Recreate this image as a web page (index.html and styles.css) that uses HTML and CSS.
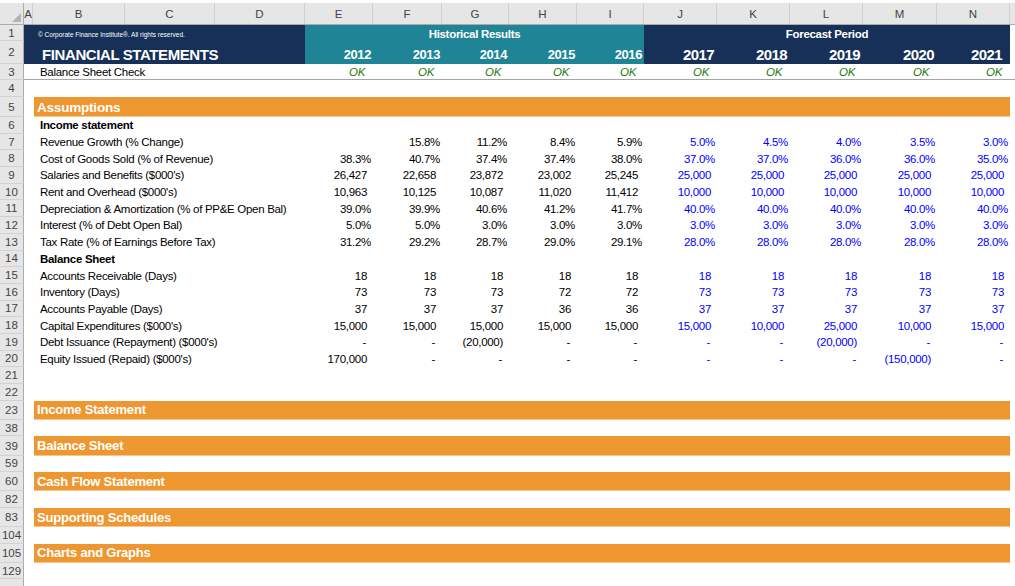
FILE: index.html
```html
<!DOCTYPE html>
<html>
<head>
<meta charset="utf-8">
<link rel="stylesheet" href="styles.css">
</head>
<body>
<div class="sheet">
  <div class="row colhead">
    <div class="corner"><span class="tri"></span></div>
    <div class="ch">A</div><div class="ch">B</div><div class="ch">C</div><div class="ch">D</div>
    <div class="ch">E</div><div class="ch">F</div><div class="ch">G</div><div class="ch">H</div><div class="ch">I</div>
    <div class="ch">J</div><div class="ch">K</div><div class="ch">L</div><div class="ch">M</div><div class="ch">N</div>
    <div class="ch last"></div>
  </div>

  <div class="row r1">
    <div class="rn">1</div>
    <div class="navy brand"><span class="copy">© Corporate Finance Institute®. All rights reserved.</span></div>
    <div class="teal grp">Historical Results</div>
    <div class="navy grp">Forecast Period</div>
    <div></div>
  </div>

  <div class="row r2">
    <div class="rn">2</div>
    <div class="navy brand"><span class="title">FINANCIAL STATEMENTS</span></div>
    <div class="teal yr">2012</div><div class="teal yr">2013</div><div class="teal yr">2014</div><div class="teal yr">2015</div><div class="teal yr">2016</div>
    <div class="navy yr fy">2017</div><div class="navy yr fy">2018</div><div class="navy yr fy">2019</div><div class="navy yr fy">2020</div><div class="navy yr fy fy-last">2021</div>
    <div></div>
  </div>

  <div class="row r3">
    <div class="rn">3</div>
    <div class="c"></div>
    <div class="lbl">Balance Sheet Check</div>
    <div class="ok">OK</div><div class="ok">OK</div><div class="ok">OK</div><div class="ok">OK</div><div class="ok">OK</div>
    <div class="ok">OK</div><div class="ok">OK</div><div class="ok">OK</div><div class="ok">OK</div><div class="ok">OK</div>
    <div class="c"></div>
  </div>

  <div class="row r4"><div class="rn">4</div></div>

  <div class="row r5">
    <div class="rn">5</div>
    <div class="c"></div>
    <div class="bar big">Assumptions</div>
  </div>

  <div class="row rd"><div class="rn">6</div><div class="c"></div><div class="lbl b">Income statement</div></div>

  <div class="row rd"><div class="rn">7</div><div class="c"></div><div class="lbl">Revenue Growth (% Change)</div>
    <div class="v"></div><div class="v pct">15.8%</div><div class="v pct">11.2%</div><div class="v pct">8.4%</div><div class="v pct">5.9%</div>
    <div class="v pct f">5.0%</div><div class="v pct f">4.5%</div><div class="v pct f">4.0%</div><div class="v pct f">3.5%</div><div class="v pct f">3.0%</div></div>

  <div class="row rd"><div class="rn">8</div><div class="c"></div><div class="lbl">Cost of Goods Sold (% of Revenue)</div>
    <div class="v pct">38.3%</div><div class="v pct">40.7%</div><div class="v pct">37.4%</div><div class="v pct">37.4%</div><div class="v pct">38.0%</div>
    <div class="v pct f">37.0%</div><div class="v pct f">37.0%</div><div class="v pct f">36.0%</div><div class="v pct f">36.0%</div><div class="v pct f">35.0%</div></div>

  <div class="row rd"><div class="rn">9</div><div class="c"></div><div class="lbl">Salaries and Benefits ($000's)</div>
    <div class="v num">26,427</div><div class="v num">22,658</div><div class="v num">23,872</div><div class="v num">23,002</div><div class="v num">25,245</div>
    <div class="v num f">25,000</div><div class="v num f">25,000</div><div class="v num f">25,000</div><div class="v num f">25,000</div><div class="v num f">25,000</div></div>

  <div class="row rd"><div class="rn">10</div><div class="c"></div><div class="lbl">Rent and Overhead ($000's)</div>
    <div class="v num">10,963</div><div class="v num">10,125</div><div class="v num">10,087</div><div class="v num">11,020</div><div class="v num">11,412</div>
    <div class="v num f">10,000</div><div class="v num f">10,000</div><div class="v num f">10,000</div><div class="v num f">10,000</div><div class="v num f">10,000</div></div>

  <div class="row rd"><div class="rn">11</div><div class="c"></div><div class="lbl">Depreciation &amp; Amortization (% of PP&amp;E Open Bal)</div>
    <div class="v pct">39.0%</div><div class="v pct">39.9%</div><div class="v pct">40.6%</div><div class="v pct">41.2%</div><div class="v pct">41.7%</div>
    <div class="v pct f">40.0%</div><div class="v pct f">40.0%</div><div class="v pct f">40.0%</div><div class="v pct f">40.0%</div><div class="v pct f">40.0%</div></div>

  <div class="row rd"><div class="rn">12</div><div class="c"></div><div class="lbl">Interest (% of Debt Open Bal)</div>
    <div class="v pct">5.0%</div><div class="v pct">5.0%</div><div class="v pct">3.0%</div><div class="v pct">3.0%</div><div class="v pct">3.0%</div>
    <div class="v pct f">3.0%</div><div class="v pct f">3.0%</div><div class="v pct f">3.0%</div><div class="v pct f">3.0%</div><div class="v pct f">3.0%</div></div>

  <div class="row rd"><div class="rn">13</div><div class="c"></div><div class="lbl">Tax Rate (% of Earnings Before Tax)</div>
    <div class="v pct">31.2%</div><div class="v pct">29.2%</div><div class="v pct">28.7%</div><div class="v pct">29.0%</div><div class="v pct">29.1%</div>
    <div class="v pct f">28.0%</div><div class="v pct f">28.0%</div><div class="v pct f">28.0%</div><div class="v pct f">28.0%</div><div class="v pct f">28.0%</div></div>

  <div class="row rd"><div class="rn">14</div><div class="c"></div><div class="lbl b">Balance Sheet</div></div>

  <div class="row rd"><div class="rn">15</div><div class="c"></div><div class="lbl">Accounts Receivable (Days)</div>
    <div class="v num">18</div><div class="v num">18</div><div class="v num">18</div><div class="v num">18</div><div class="v num">18</div>
    <div class="v num f">18</div><div class="v num f">18</div><div class="v num f">18</div><div class="v num f">18</div><div class="v num f">18</div></div>

  <div class="row rd"><div class="rn">16</div><div class="c"></div><div class="lbl">Inventory (Days)</div>
    <div class="v num">73</div><div class="v num">73</div><div class="v num">73</div><div class="v num">72</div><div class="v num">72</div>
    <div class="v num f">73</div><div class="v num f">73</div><div class="v num f">73</div><div class="v num f">73</div><div class="v num f">73</div></div>

  <div class="row rd"><div class="rn">17</div><div class="c"></div><div class="lbl">Accounts Payable (Days)</div>
    <div class="v num">37</div><div class="v num">37</div><div class="v num">37</div><div class="v num">36</div><div class="v num">36</div>
    <div class="v num f">37</div><div class="v num f">37</div><div class="v num f">37</div><div class="v num f">37</div><div class="v num f">37</div></div>

  <div class="row rd"><div class="rn">18</div><div class="c"></div><div class="lbl">Capital Expenditures ($000's)</div>
    <div class="v num">15,000</div><div class="v num">15,000</div><div class="v num">15,000</div><div class="v num">15,000</div><div class="v num">15,000</div>
    <div class="v num f">15,000</div><div class="v num f">10,000</div><div class="v num f">25,000</div><div class="v num f">10,000</div><div class="v num f">15,000</div></div>

  <div class="row rd"><div class="rn">19</div><div class="c"></div><div class="lbl">Debt Issuance (Repayment) ($000's)</div>
    <div class="v dash">-</div><div class="v dash">-</div><div class="v neg">(20,000)</div><div class="v dash">-</div><div class="v dash">-</div>
    <div class="v dash f">-</div><div class="v dash f">-</div><div class="v neg f">(20,000)</div><div class="v dash f">-</div><div class="v dash f">-</div></div>

  <div class="row rd"><div class="rn">20</div><div class="c"></div><div class="lbl">Equity Issued (Repaid) ($000's)</div>
    <div class="v num">170,000</div><div class="v dash">-</div><div class="v dash">-</div><div class="v dash">-</div><div class="v dash">-</div>
    <div class="v dash f">-</div><div class="v dash f">-</div><div class="v dash f">-</div><div class="v neg f">(150,000)</div><div class="v dash f">-</div></div>

  <div class="row rd"><div class="rn">21</div></div>
  <div class="row rd"><div class="rn">22</div></div>

  <div class="row rs"><div class="rn">23</div><div class="c"></div><div class="bar">Income Statement</div></div>
  <div class="row rg"><div class="rn">38</div></div>
  <div class="row rs"><div class="rn">39</div><div class="c"></div><div class="bar">Balance Sheet</div></div>
  <div class="row rg"><div class="rn">59</div></div>
  <div class="row rs"><div class="rn">60</div><div class="c"></div><div class="bar">Cash Flow Statement</div></div>
  <div class="row rg"><div class="rn">82</div></div>
  <div class="row rs"><div class="rn">83</div><div class="c"></div><div class="bar">Supporting Schedules</div></div>
  <div class="row rg"><div class="rn">104</div></div>
  <div class="row rs"><div class="rn">105</div><div class="c"></div><div class="bar">Charts and Graphs</div></div>
  <div class="row rg"><div class="rn">129</div></div>
  <div class="row rg"><div class="rn"></div></div>
</div>
</body>
</html>
```

FILE: styles.css
```css
html, body {
  margin: 0;
  padding: 0;
  background: #ffffff;
}

body {
  width: 1015px;
  height: 586px;
  overflow: hidden;
  font-family: "Liberation Sans", Arial, sans-serif;
  color: #000;
}

.sheet {
  display: flex;
  flex-direction: column;
}

.row {
  display: grid;
  grid-template-columns: 24px 9px 92px 90px 90px 68px 69px 67px 68px 67px 73px 73px 73px 74px 73px 1fr;
  box-sizing: border-box;
}

.row > div {
  display: flex;
  align-items: center;
  min-width: 0;
  white-space: nowrap;
  box-sizing: border-box;
}

/* column header */
.colhead {
  height: 22px;
  margin-top: 3px;
  background: #e6e6e6;
  border-bottom: 1px solid #ababab;
}

.colhead .ch {
  justify-content: center;
  font-size: 11.5px;
  color: #444;
  border-right: 1px solid #cfcfcf;
}

.colhead .ch.last {
  border-right: none;
}

.corner {
  position: relative;
  border-right: 1px solid #ababab;
}

.tri {
  position: absolute;
  right: 2px;
  bottom: 2px;
  width: 0;
  height: 0;
  border-left: 9px solid transparent;
  border-bottom: 9px solid #b3b3b3;
}

/* row numbers */
.rn {
  justify-content: center;
  background: #e6e6e6;
  color: #444;
  font-size: 11.5px;
  border-right: 1px solid #ababab;
  border-bottom: 1px solid #d2d2d2;
}

.r1 { height: 16px; }
.r2 { height: 23px; }
.r3 { height: 16px; }
.r4 { height: 17px; }
.r5 { height: 20px; }
.rd { height: 16.7px; }
.rs { height: 19.25px; }
.rg { height: 16.5px; }

.navy { background: #163058; color: #fff; }
.teal { background: #1f8496; color: #fff; }

.brand {
  grid-column: 2 / span 4;
}

.r1 .brand { padding-left: 14px; padding-top: 2px; }
.r2 .brand { padding-left: 18px; padding-top: 3px; }

.copy {
  font-size: 6.5px;
  color: #fff;
}

.title {
  font-size: 15px;
  font-weight: bold;
  letter-spacing: -0.4px;
}

.grp {
  grid-column: span 5;
  justify-content: center;
  font-size: 11.5px;
  font-weight: bold;
  letter-spacing: -0.3px;
  padding-top: 1px;
}

.yr {
  justify-content: flex-end;
  font-weight: bold;
  font-size: 13px;
  letter-spacing: -0.4px;
  padding-right: 2px;
  padding-top: 4px;
}

.fy {
  font-size: 15px;
  letter-spacing: -0.6px;
  padding-right: 3px;
}

.fy-last { padding-right: 8px; }

/* row 3 */
.r3 > div:not(.rn) {
  border-bottom: 1px solid #a6a6a6;
}

.lbl {
  grid-column: 3 / span 3;
  padding-left: 7px;
  font-size: 11.5px;
  letter-spacing: -0.3px;
}

.lbl.b { font-weight: bold; }

.ok {
  justify-content: flex-end;
  padding-right: 8px;
  font-style: italic;
  font-size: 11.5px;
  letter-spacing: -0.3px;
  color: #1d7a10;
}

/* values */
.v {
  justify-content: flex-end;
  font-size: 11.5px;
  letter-spacing: -0.3px;
}

.pct { padding-right: 2px; }
.num { padding-right: 6px; }
.neg { padding-right: 6px; }
.dash { padding-right: 7px; }
.f { color: #0000ff; }

/* section bars */
.bar {
  grid-column: 3 / span 13;
  margin-left: 1px;
  background: #ee962f;
  color: #fff;
  font-weight: bold;
  font-size: 13px;
  letter-spacing: -0.2px;
  padding-left: 3px;
  border-bottom: 1px solid #f6c692;
}

.bar.big {
  font-size: 13.5px;
  padding-top: 1px;
}
```
